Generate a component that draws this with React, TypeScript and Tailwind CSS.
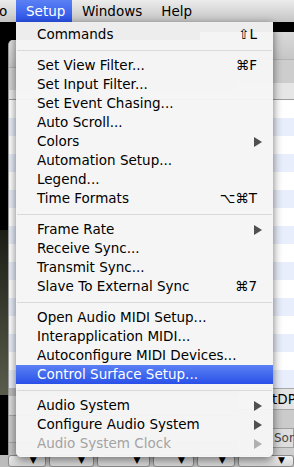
import React from 'react';

type Item =
  | { kind: 'sep' }
  | { kind: 'item'; label: string; shortcut?: string; sub?: boolean; active?: boolean; disabled?: boolean };

const items: Item[] = [
  { kind: 'item', label: 'Commands', shortcut: '⇧L' },
  { kind: 'sep' },
  { kind: 'item', label: 'Set View Filter...', shortcut: '⌘F' },
  { kind: 'item', label: 'Set Input Filter...' },
  { kind: 'item', label: 'Set Event Chasing...' },
  { kind: 'item', label: 'Auto Scroll...' },
  { kind: 'item', label: 'Colors', sub: true },
  { kind: 'item', label: 'Automation Setup...' },
  { kind: 'item', label: 'Legend...' },
  { kind: 'item', label: 'Time Formats', shortcut: '⌥⌘T' },
  { kind: 'sep' },
  { kind: 'item', label: 'Frame Rate', sub: true },
  { kind: 'item', label: 'Receive Sync...' },
  { kind: 'item', label: 'Transmit Sync...' },
  { kind: 'item', label: 'Slave To External Sync', shortcut: '⌘7' },
  { kind: 'sep' },
  { kind: 'item', label: 'Open Audio MIDI Setup...' },
  { kind: 'item', label: 'Interapplication MIDI...' },
  { kind: 'item', label: 'Autoconfigure MIDI Devices...' },
  { kind: 'item', label: 'Control Surface Setup...', active: true },
  { kind: 'sep' },
  { kind: 'item', label: 'Audio System', sub: true },
  { kind: 'item', label: 'Configure Audio System', sub: true },
  { kind: 'item', label: 'Audio System Clock', sub: true, disabled: true },
];

const font = { fontFamily: '"DejaVu Sans", "Noto Sans", sans-serif' };

function Arrow({ color }: { color: string }) {
  return (
    <svg width="8" height="10" viewBox="0 0 8 10">
      <path d="M0 0 L8 5 L0 10 Z" fill={color} />
    </svg>
  );
}

function MenuRow({ item }: { item: Extract<Item, { kind: 'item' }> }) {
  const base = 'h-[19px] flex items-center justify-between pl-[21px]';
  const pad = item.sub ? 'pr-[11px]' : 'pr-[16px]';
  const tone = item.active
    ? 'bg-gradient-to-b from-[#5b80f4] to-[#2a50e8] text-white'
    : item.disabled
      ? 'text-[#a3a3a3]'
      : 'text-black';
  return (
    <div className={`${base} ${pad} ${tone}`}>
      <span>{item.label}</span>
      {item.shortcut && <span>{item.shortcut}</span>}
      {item.sub && <Arrow color={item.disabled ? '#b0b0b0' : '#505050'} />}
    </div>
  );
}

function ListRows({ count }: { count: number }) {
  return (
    <div className="flex flex-col">
      {Array.from({ length: count }).map((_, i) => (
        <div key={i} className={`h-[18px] ${i % 2 === 1 ? 'bg-[#e8eefb]' : 'bg-white'}`} />
      ))}
    </div>
  );
}

function WindowHeader() {
  return (
    <div className="h-[60px] flex flex-col">
      <div className="h-[28px] bg-gradient-to-b from-[#e2e2e2] to-[#cacaca] border-b border-[#b4b4b4]" />
      <div className="h-[22px] bg-[#d4d4d4]" />
      <div className="h-[10px] bg-[#ececec] border-b border-[#9c9c9c]" />
    </div>
  );
}

export default function App() {
  return (
    <div className="relative w-[294px] h-[467px] overflow-hidden bg-black text-[13.5px]" style={font}>
      {/* menu bar */}
      <div className="relative z-20 h-[22px] flex items-center bg-gradient-to-b from-[#ececec] to-[#c4c4c4] text-black">
        <span className="ml-[-1px] w-[17px]">o</span>
        <div className="h-[22px] w-[56px] flex items-center pl-[10px] bg-gradient-to-b from-[#5b80f4] to-[#2a50e8] text-white">
          Setup
        </div>
        <span className="ml-[10px]">Windows</span>
        <span className="ml-[19px]">Help</span>
      </div>

      {/* desktop image at the left */}
      <div className="absolute left-0 top-[230px] w-[10px] h-[165px] bg-gradient-to-b from-[#1c1d16] via-[#3b3d30] to-[#5a5c4c]" />

      {/* background window on the right */}
      <div className="absolute left-[200px] top-[32px] right-0 bottom-0 flex flex-col bg-[#cfcfcf]">
        <div className="h-[68px] flex flex-col">
          <div className="h-[28px] bg-gradient-to-b from-[#dadada] to-[#c6c6c6] border-b border-[#b4b4b4]" />
          <div className="h-[23px] bg-[#cdcdcd]" />
          <div className="h-[17px] bg-[#e6e6e6] border-b border-[#9c9c9c]" />
        </div>
        <ListRows count={16} />
        <div className="h-[22px] flex items-center bg-[#e4e4e4] border-y border-[#a8a8a8] pl-[72px] text-black whitespace-nowrap">
          tDP
        </div>
        <div className="h-[18px] bg-[#cbcbcb]" />
        <div className="h-[20px] flex items-center border border-[#a0a0a0] bg-[#dedede] ml-[71px] pl-[2px] text-[12px] text-[#444] whitespace-nowrap">
          Song
        </div>
      </div>

      {/* background window on the left */}
      <div className="absolute left-[8px] top-[40px] w-[230px] bottom-0 flex flex-col rounded-tl-[5px] overflow-hidden bg-[#cfcfcf] border-l border-[#9a9a9a]">
        <WindowHeader />
        <ListRows count={16} />
        <div className="h-[8px] bg-[#bdbdbd]" />
        <div className="h-[20px] bg-[#dcdcdc] border-b border-[#a8a8a8]" />
        <div className="h-[27px] bg-[#cbcbcb] border-b border-[#a8a8a8]" />
        <div className="flex-1 bg-[#c6c6c6]" />
      </div>

      {/* bottom toolbar strip */}
      <div className="absolute left-0 right-0 bottom-0 h-[12px] flex gap-[3px] pl-[8px] bg-[#bcbcbc]">
        {[40, 48, 56, 44, 40, 60].map((w, i) => (
          <div
            key={i}
            className="h-[12px] flex items-start justify-end pr-[8px] border border-[#8c8c8c] rounded-[3px] bg-gradient-to-b from-[#f2f2f2] to-[#d6d6d6] text-[9px] leading-[9px] text-black"
            style={{ width: w }}
          >
            ▼
          </div>
        ))}
      </div>

      {/* the Setup menu */}
      <div className="absolute z-30 left-[16px] top-[22px] w-[257px] pt-[3px] pb-[4px] rounded-b-[5px] bg-[#f5f5f5]/[0.97] shadow-[0_3px_10px_rgba(0,0,0,0.55)]">
        {items.map((item, i) =>
          item.kind === 'sep' ? (
            <div key={i} className="h-[12px] flex items-center px-[1px]">
              <div className="h-px w-full bg-[#d9d9d9]" />
            </div>
          ) : (
            <MenuRow key={i} item={item} />
          ),
        )}
      </div>
    </div>
  );
}
